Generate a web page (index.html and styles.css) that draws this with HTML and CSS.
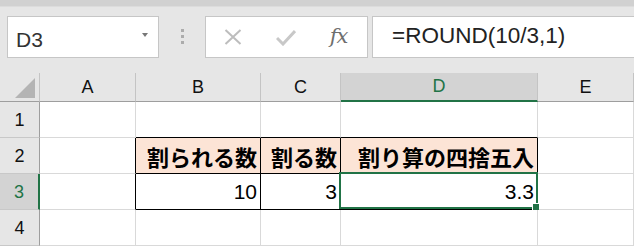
FILE: index.html
```html
<!DOCTYPE html>
<html lang="ja">
<head>
    <meta charset="UTF-8">
    <title>Book1 - Excel</title>
    <link rel="stylesheet" href="styles.css">
</head>
<body>
    <div class="app">
        <div class="ribbon-edge"></div>
        <div class="formula-bar">
            <div class="name-box">
                <span>D3</span>
                <span class="caret"></span>
            </div>
            <div class="grip"><i></i><i></i><i></i></div>
            <div class="fx-buttons">
                <span class="fx-btn">
                    <svg width="18" height="16" viewBox="0 0 18 16">
                        <path d="M1.5 1 L16.5 15 M16.5 1 L1.5 15" stroke="#bdbdbd" stroke-width="2" fill="none"/>
                    </svg>
                </span>
                <span class="fx-btn">
                    <svg width="20" height="17" viewBox="0 0 20 17">
                        <path d="M1 9 L7 15 L19 2" stroke="#c8c8c8" stroke-width="3" fill="none"/>
                    </svg>
                </span>
                <span class="fx-btn fx-label">fx</span>
            </div>
            <div class="formula">=ROUND(10/3,1)</div>
        </div>

        <div class="sheet">
            <div class="corner"><span class="corner-tri"></span></div>
            <div class="col-head">A</div>
            <div class="col-head">B</div>
            <div class="col-head">C</div>
            <div class="col-head active">D</div>
            <div class="col-head">E</div>

            <div class="row-head">1</div>
            <div class="cell"></div>
            <div class="cell edge-b"></div>
            <div class="cell edge-b"></div>
            <div class="cell edge-b"></div>
            <div class="cell"></div>

            <div class="row-head">2</div>
            <div class="cell edge-r"></div>
            <div class="cell boxed title">割られる数</div>
            <div class="cell boxed title">割る数</div>
            <div class="cell boxed title">割り算の四捨五入</div>
            <div class="cell"></div>

            <div class="row-head active">3</div>
            <div class="cell edge-r"></div>
            <div class="cell boxed num">10</div>
            <div class="cell boxed num">3</div>
            <div class="cell boxed num current">
                3.3
                <span class="selection"><span class="fill-handle"></span></span>
            </div>
            <div class="cell"></div>

            <div class="row-head">4</div>
            <div class="cell"></div>
            <div class="cell"></div>
            <div class="cell"></div>
            <div class="cell"></div>
            <div class="cell"></div>
        </div>
    </div>
</body>
</html>
```

FILE: styles.css
```css
body {
    margin: 0;
    font-family: "Liberation Sans", "Noto Sans CJK JP", sans-serif;
    background: #fff;
}

.app {
    width: 634px;
    height: 246px;
    overflow: hidden;
}

.ribbon-edge {
    height: 6px;
    background-color: #d1d1d1;
    border-bottom: 1px solid #dcdcdc;
}

/* formula bar */
.formula-bar {
    display: flex;
    align-items: flex-start;
    padding: 9px 0 15px 7px;
    background-color: #e6e6e6;
}

.name-box {
    box-sizing: border-box;
    width: 152px;
    height: 42px;
    display: flex;
    align-items: center;
    justify-content: space-between;
    padding: 5px 10px 0 8px;
    border: 1px solid #c6c6c6;
    background: #fff;
    color: #333;
    font-size: 21px;
}

.caret {
    width: 0;
    height: 0;
    margin-bottom: 9px;
    border-left: 3px solid transparent;
    border-right: 3px solid transparent;
    border-top: 4px solid #777;
}

.grip {
    width: 46px;
    display: flex;
    flex-direction: column;
    align-items: center;
    gap: 3px;
    padding-top: 13px;
}

.grip i {
    width: 3px;
    height: 3px;
    background-color: #acacac;
}

.fx-buttons {
    box-sizing: border-box;
    width: 163px;
    height: 42px;
    display: flex;
    align-items: center;
    border: 1px solid #c6c6c6;
    background: #fff;
}

.fx-btn {
    width: 53px;
    display: flex;
    justify-content: center;
    align-items: center;
}

.fx-label {
    font-family: "DejaVu Serif", serif;
    font-style: italic;
    font-size: 21px;
    color: #6e6e6e;
    padding-bottom: 3px;
    letter-spacing: -1px;
}

.formula {
    box-sizing: border-box;
    flex: 1;
    height: 42px;
    margin-left: 4px;
    display: flex;
    align-items: center;
    padding: 0 0 3px 19px;
    border: 1px solid #c6c6c6;
    border-right: none;
    background: #fff;
    color: #222;
    font-size: 22.5px;
}

/* sheet grid */
.sheet {
    display: grid;
    grid-template-columns: 40px 96px 125px 80px 197px 96px;
    grid-template-rows: 29px repeat(4, 36px);
}

.sheet > div {
    box-sizing: border-box;
    display: flex;
    align-items: center;
    white-space: nowrap;
}

.corner {
    background-color: #e6e6e6;
    border-right: 1px solid #c4c4c4;
    border-bottom: 1px solid #9e9e9e;
    justify-content: flex-end;
    align-items: flex-end !important;
    padding: 0 4px 3px 0;
}

.corner-tri {
    width: 0;
    height: 0;
    border-left: 20px solid transparent;
    border-bottom: 20px solid #b4b4b4;
}

.col-head {
    justify-content: center;
    background-color: #e6e6e6;
    border-right: 1px solid #c4c4c4;
    border-bottom: 1px solid #9e9e9e;
    font-size: 18px;
    color: #111;
}

.col-head.active {
    background-color: #d3d3d3;
    color: #217346;
    border-bottom: 2px solid #217346;
}

.row-head {
    justify-content: center;
    background-color: #e6e6e6;
    border-right: 1px solid #9e9e9e;
    border-bottom: 1px solid #c8c8c8;
    font-size: 18px;
    color: #111;
    padding-top: 1px;
}

.row-head.active {
    background-color: #d3d3d3;
    color: #217346;
    border-right: 2px solid #217346;
}

.cell {
    border-right: 1px solid #d9d9d9;
    border-bottom: 1px solid #d9d9d9;
    justify-content: flex-end;
    color: #000;
}

.cell.edge-b {
    border-bottom-color: #000;
}

.cell.edge-r {
    border-right-color: #000;
}

.cell.boxed {
    border-right-color: #000;
    border-bottom-color: #000;
}

.title {
    background-color: #fce4d6;
    font-family: "Noto Sans CJK JP", sans-serif;
    font-weight: bold;
    font-size: 22px;
    line-height: 22px;
    padding-right: 3px;
}

.num {
    font-size: 21px;
    padding-right: 3px;
}

.current {
    position: relative;
}

.selection {
    position: absolute;
    left: -2px;
    top: -2px;
    right: -1px;
    bottom: 0;
    border: 2px solid #217346;
    z-index: 2;
}

.fill-handle {
    position: absolute;
    right: -3px;
    bottom: -3px;
    width: 6px;
    height: 6px;
    background-color: #217346;
    border-left: 1px solid #fff;
    border-top: 1px solid #fff;
}
```
